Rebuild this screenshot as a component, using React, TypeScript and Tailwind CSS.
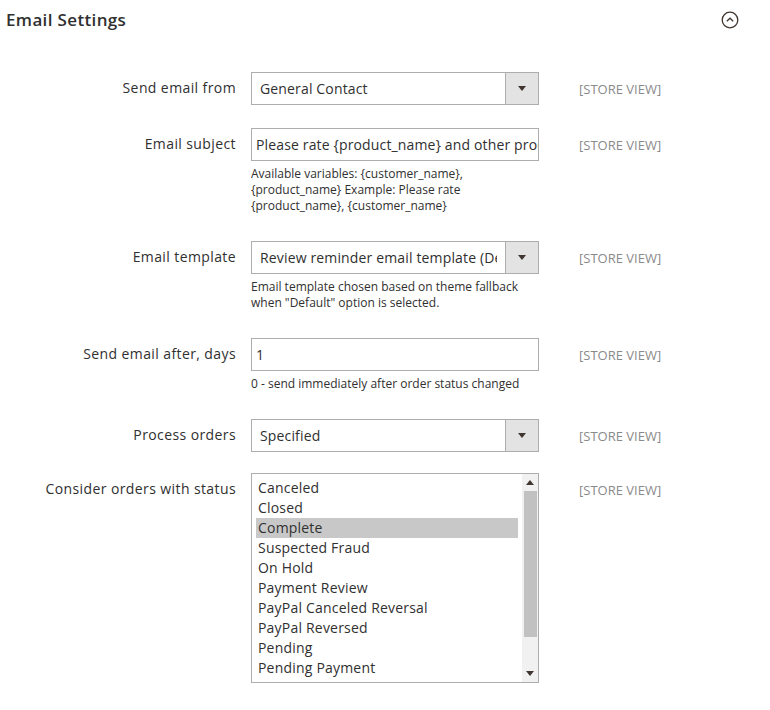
import { ReactNode } from "react";

const font = { fontFamily: '"Open Sans", "Noto Sans", sans-serif' };

const statuses = [
  "Canceled",
  "Closed",
  "Complete",
  "Suspected Fraud",
  "On Hold",
  "Payment Review",
  "PayPal Canceled Reversal",
  "PayPal Reversed",
  "Pending",
  "Pending Payment",
];

const Arrow = ({ up }: { up?: boolean }) => (
  <svg width="8" height="5" viewBox="0 0 8 5" className={up ? "rotate-180" : ""}>
    <path d="M0 0h8L4 5z" fill="#41362f" />
  </svg>
);

const SelectBox = ({ value }: { value: string }) => (
  <div className="flex h-[33px] w-[288px] border border-[#adadad] bg-white">
    <div className="mr-[8px] flex-1 overflow-hidden whitespace-nowrap pl-[8px] pt-[6px] text-[14px] leading-[20px] tracking-[0.15px] text-[#303030]">
      {value}
    </div>
    <div className="flex w-[33px] items-center justify-center border-l border-[#adadad] bg-[#e3e3e3]">
      <Arrow />
    </div>
  </div>
);

const TextBox = ({ value }: { value: string }) => (
  <div className="h-[33px] w-[288px] overflow-hidden whitespace-nowrap border border-[#adadad] bg-white pl-[4px] pt-[6px] text-[14px] leading-[20px] tracking-[0.15px] text-[#303030]">
    {value}
  </div>
);

const Note = ({ children }: { children: ReactNode }) => (
  <div className="mt-[5px] w-[275px] text-[12px] leading-[16px] text-[#303030]">{children}</div>
);

interface RowProps {
  label: string;
  top: string;
  children: ReactNode;
}

const Row = ({ label, top, children }: RowProps) => (
  <div className={`flex ${top}`}>
    <div className="w-[236px] pt-[6px] text-right text-[14px] leading-[20px] tracking-[0.4px] text-[#303030]">
      {label}
    </div>
    <div className="ml-[15px] w-[288px]">{children}</div>
    <div className="ml-[40px] pt-[9px] text-[13px] leading-[16px] text-[#8a8a8a]">[STORE VIEW]</div>
  </div>
);

const MultiSelect = () => (
  <div className="flex h-[210px] w-[288px] border border-[#adadad] bg-white">
    <div className="flex-1 pl-[4px] pr-[4px] pt-[4px]">
      {statuses.map((s) => (
        <div
          key={s}
          className={`h-[20px] whitespace-nowrap pl-[2px] text-[14px] leading-[20px] tracking-[0.2px] text-[#303030] ${
            s === "Complete" ? "bg-[#c8c8c8]" : ""
          }`}
        >
          {s}
        </div>
      ))}
    </div>
    <div className="flex w-[16px] flex-col items-center bg-[#f1f1f1]">
      <div className="flex h-[17px] items-center justify-center">
        <Arrow up />
      </div>
      <div className="h-[146px] w-[13px] bg-[#c1c1c1]" />
      <div className="flex-1" />
      <div className="flex h-[17px] items-center justify-center">
        <Arrow />
      </div>
    </div>
  </div>
);

export default function App() {
  return (
    <div className="h-[710px] w-[770px] bg-white" style={font}>
      <div className="flex items-center justify-between pl-[6px] pr-[31px] pt-[8px]">
        <h2 className="text-[17px] font-semibold leading-[24px] tracking-[0.35px] text-[#303030]">
          Email Settings
        </h2>
        <svg width="18" height="18" viewBox="0 0 18 18">
          <circle cx="9" cy="9" r="7.8" fill="none" stroke="#41362f" strokeWidth="1.3" />
          <path d="M5.8 10.3 9 7.2l3.2 3.1" fill="none" stroke="#41362f" strokeWidth="1.3" />
        </svg>
      </div>

      <Row label="Send email from" top="mt-[40px]">
        <SelectBox value="General Contact" />
      </Row>

      <Row label="Email subject" top="mt-[23px]">
        <TextBox value="Please rate {product_name} and other products" />
        <Note>
          Available variables: {"{customer_name}"}, {"{product_name}"} Example: Please rate{" "}
          {"{product_name}"}, {"{customer_name}"}
        </Note>
      </Row>

      <Row label="Email template" top="mt-[27px]">
        <SelectBox value="Review reminder email template (Default)" />
        <Note>Email template chosen based on theme fallback when "Default" option is selected.</Note>
      </Row>

      <Row label="Send email after, days" top="mt-[27px]">
        <TextBox value="1" />
        <Note>0 - send immediately after order status changed</Note>
      </Row>

      <Row label="Process orders" top="mt-[27px]">
        <SelectBox value="Specified" />
      </Row>

      <Row label="Consider orders with status" top="mt-[21px]">
        <MultiSelect />
      </Row>
    </div>
  );
}
